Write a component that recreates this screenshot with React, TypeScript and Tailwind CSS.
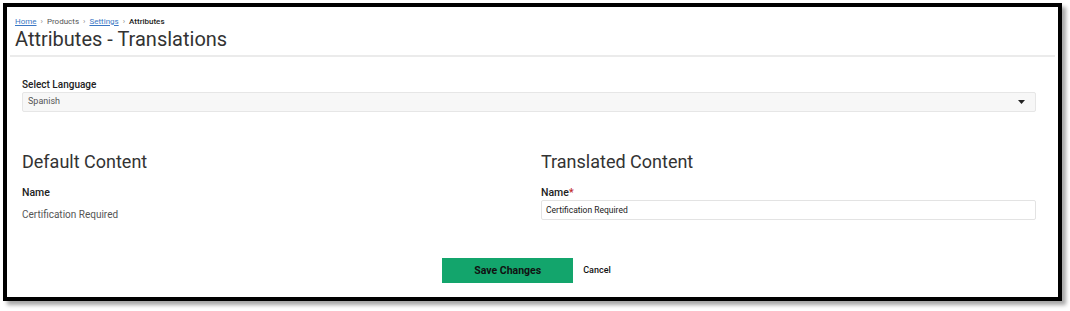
export default function App() {
  return (
    <div className="w-[1070px] h-[311px] bg-white" style={{ fontFamily: "Roboto, 'Liberation Sans', sans-serif" }}>
      <div className="ml-[3px] pt-[3px]">
        <div className="w-[1059px] h-[298px] border-4 border-black bg-white shadow-[4px_4px_4px_rgba(0,0,0,0.35)] flex flex-col">
          {/* Header */}
          <div className="px-[3px]">
            <div className="pl-[5px] pt-[10px] border-b-2 border-[#ebebeb] pb-[4px]">
              <div className="flex items-center gap-[4px] text-[8px] leading-[10px] text-[#555]">
                <a className="text-[#3a77c4] underline">Home</a>
                <span className="text-[#888]">›</span>
                <span>Products</span>
                <span className="text-[#888]">›</span>
                <a className="text-[#3a77c4] underline">Settings</a>
                <span className="text-[#888]">›</span>
                <span className="text-[#222] font-medium">Attributes</span>
              </div>
              <h1 className="text-[20px] leading-[24px] text-[#333] font-normal">Attributes - Translations</h1>
            </div>
          </div>

          {/* Body */}
          <div className="px-[15px] pt-[21px]">
            <label className="block text-[10px] leading-[13px] font-medium text-[#222]">Select Language</label>
            <div className="mt-[1px] h-[20px] w-[1014px] bg-[#f7f7f7] border border-[#e6e6e6] rounded-[2px] flex items-center justify-between px-[5px]">
              <span className="text-[9px] text-[#555]">Spanish</span>
              <svg width="7" height="4" viewBox="0 0 7 4" className="mr-[5px]">
                <path d="M0 0h7L3.5 4z" fill="#222" />
              </svg>
            </div>

            <div className="grid grid-cols-[494px_495px] gap-x-[25px] mt-[39px]">
              <div>
                <h2 className="text-[18px] leading-[22px] text-[#333] font-normal">Default Content</h2>
                <div className="mt-[13px] text-[10.5px] leading-[13px] font-medium text-[#222]">Name</div>
                <div className="mt-[9px] text-[10px] leading-[13px] text-[#555]">Certification Required</div>
              </div>
              <div>
                <h2 className="text-[18px] leading-[22px] text-[#333] font-normal">Translated Content</h2>
                <div className="mt-[13px] text-[10.5px] leading-[13px] font-medium text-[#222]">
                  Name<span className="text-[#c0272d]">*</span>
                </div>
                <div className="mt-[1px] h-[20px] border border-[#e3e3e3] rounded-[2px] flex items-center px-[4px]">
                  <span className="text-[8.5px] text-[#222]">Certification Required</span>
                </div>
              </div>
            </div>

            <div className="flex items-center justify-center mt-[37px] gap-[10px] pr-[12px]">
              <button className="w-[131px] h-[25px] bg-[#13a56c] text-[#111] text-[10.5px] font-bold">Save Changes</button>
              <button className="text-[9px] text-[#111] font-medium">Cancel</button>
            </div>
          </div>
        </div>
      </div>
    </div>
  );
}
